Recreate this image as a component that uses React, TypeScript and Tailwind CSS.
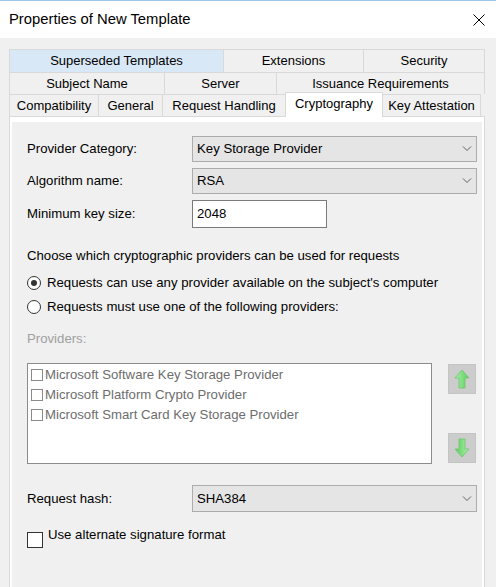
import { clsx } from 'clsx';

type TabDef = { label: string; w: string; last?: boolean; hover?: boolean };

const rowOne: TabDef[] = [
  { label: 'Superseded Templates', w: 'w-[214px]', hover: true },
  { label: 'Extensions', w: 'w-[140px]' },
  { label: 'Security', w: 'w-[122px]', last: true },
];

const rowTwo: TabDef[] = [
  { label: 'Subject Name', w: 'w-[155px]' },
  { label: 'Server', w: 'w-[112px]' },
  { label: 'Issuance Requirements', w: 'w-[209px]', last: true },
];

const providers = [
  'Microsoft Software Key Storage Provider',
  'Microsoft Platform Crypto Provider',
  'Microsoft Smart Card Key Storage Provider',
];

function Tab({ label, w, last, hover }: TabDef) {
  return (
    <div
      className={clsx(
        'h-full flex items-center justify-center border-t border-l border-[#d9d9d9] text-[13px] text-black',
        w,
        last && 'border-r',
        hover ? 'bg-[#d9e8f7]' : 'bg-[#f0f0f0]'
      )}
    >
      {label}
    </div>
  );
}

function Chevron() {
  return (
    <svg width="10" height="6" viewBox="0 0 10 6" className="mr-[4px]">
      <path d="M1 0.5 L5 4.5 L9 0.5" fill="none" stroke="#606060" strokeWidth="1" />
    </svg>
  );
}

function Dropdown({ value, h }: { value: string; h: string }) {
  return (
    <div
      className={clsx(
        'w-[285px] flex items-center justify-between border border-[#acacac] bg-[#e5e5e5] pl-[4px]',
        h
      )}
    >
      <span>{value}</span>
      <Chevron />
    </div>
  );
}

function Arrow({ down }: { down?: boolean }) {
  return (
    <div className="w-[28px] h-[30px] flex items-center justify-center border border-[#c4c4c4] bg-[#cccccc]">
      <svg width="16" height="20" viewBox="0 0 16 20" className={clsx(down && 'rotate-180')}>
        <defs>
          <linearGradient id={down ? 'gd' : 'gu'} x1="0" y1="0" x2="1" y2="0">
            <stop offset="0" stopColor="#a8f0a8" />
            <stop offset="1" stopColor="#5ccc5c" />
          </linearGradient>
        </defs>
        <path
          d="M8 1 L15 9 L11 9 L11 19 L5 19 L5 9 L1 9 Z"
          fill={`url(#${down ? 'gd' : 'gu'})`}
          stroke="#6cc86c"
          strokeWidth="0.8"
          strokeLinejoin="round"
        />
      </svg>
    </div>
  );
}

export default function App() {
  return (
    <div className="w-[496px] h-[587px] overflow-hidden flex flex-col bg-[#f0f0f0] border-t border-[#9fc5ec] font-['Liberation_Sans',Arial,sans-serif] text-black">
      {/* title bar */}
      <div className="h-[37px] shrink-0 bg-white flex items-center justify-between pl-[9px] pr-[11px]">
        <span className="text-[14.8px]">Properties of New Template</span>
        <svg width="12" height="12" viewBox="0 0 12 12">
          <path d="M0.5 0.5 L11.5 11.5 M11.5 0.5 L0.5 11.5" stroke="#000" strokeWidth="1" />
        </svg>
      </div>

      {/* tab strip */}
      <div className="flex-1 flex flex-col pl-[9px] pt-[11px]">
        <div className="flex h-[23px]">
          {rowOne.map((t) => (
            <Tab key={t.label} {...t} />
          ))}
        </div>
        <div className="flex h-[22px]">
          {rowTwo.map((t) => (
            <Tab key={t.label} {...t} />
          ))}
        </div>
        <div className="flex h-[22px] items-end">
          <Tab label="Compatibility" w="w-[89px]" />
          <Tab label="General" w="w-[64px]" />
          <Tab label="Request Handling" w="w-[123px]" />
          <div className="relative z-10 w-[98px] h-[25px] -mb-px flex items-center justify-center pb-[3px] bg-white border-t border-l border-r border-[#d9d9d9] text-[13px]">
            Cryptography
          </div>
          <div className="w-[98px] h-full flex items-center justify-center border-t border-r border-[#d9d9d9] bg-[#f0f0f0] text-[13px]">
            Key Attestation
          </div>
        </div>

        {/* page */}
        <div className="flex-1 w-[476px] border-t border-l border-r border-[#d9d9d9] bg-white px-[2px] pt-[5px] flex">
          <div className="flex-1 bg-[#f0f0f0] pl-[15px] pr-[5px] pt-[14px] text-[13.2px]">
            <div className="flex items-center">
              <span className="w-[165px]">Provider Category:</span>
              <Dropdown value="Key Storage Provider" h="h-[26px]" />
            </div>
            <div className="flex items-center mt-[6px]">
              <span className="w-[165px]">Algorithm name:</span>
              <Dropdown value="RSA" h="h-[26px]" />
            </div>
            <div className="flex items-center mt-[6px]">
              <span className="w-[165px]">Minimum key size:</span>
              <div className="w-[135px] h-[28px] flex items-center border border-[#7a7a7a] bg-white pl-[4px]">
                2048
              </div>
            </div>

            <div className="mt-[18px] h-[20px] flex items-center">
              Choose which cryptographic providers can be used for requests
            </div>
            <div className="mt-[7px] h-[20px] flex items-center gap-[6px]">
              <span className="w-[14px] h-[14px] rounded-full border border-[#333] bg-white flex items-center justify-center">
                <span className="w-[6px] h-[6px] rounded-full bg-[#333]" />
              </span>
              Requests can use any provider available on the subject's computer
            </div>
            <div className="mt-[4px] h-[20px] flex items-center gap-[6px]">
              <span className="w-[14px] h-[14px] rounded-full border border-[#333] bg-white" />
              Requests must use one of the following providers:
            </div>

            <div className="mt-[12px] h-[20px] flex items-center text-[#a0a0a0]">Providers:</div>

            <div className="mt-[14px] flex gap-[16px]">
              <div className="w-[405px] h-[101px] border border-[#8c8c8c] bg-white pl-[3px] pt-px">
                {providers.map((p) => (
                  <div key={p} className="h-[20px] flex items-center gap-[2px] text-[#6d6d6d]">
                    <span className="w-[12px] h-[12px] border border-[#8a8a8a] bg-white" />
                    {p}
                  </div>
                ))}
              </div>
              <div className="flex flex-col justify-between py-px">
                <Arrow />
                <Arrow down />
              </div>
            </div>

            <div className="mt-[21px] flex items-center">
              <span className="w-[165px]">Request hash:</span>
              <Dropdown value="SHA384" h="h-[27px]" />
            </div>

            <div className="mt-[13px] flex items-start gap-[5px]">
              <span className="mt-[7px] w-[16px] h-[16px] border border-[#333] bg-white" />
              <span className="h-[20px] flex items-center">Use alternate signature format</span>
            </div>
          </div>
        </div>
      </div>
    </div>
  );
}
